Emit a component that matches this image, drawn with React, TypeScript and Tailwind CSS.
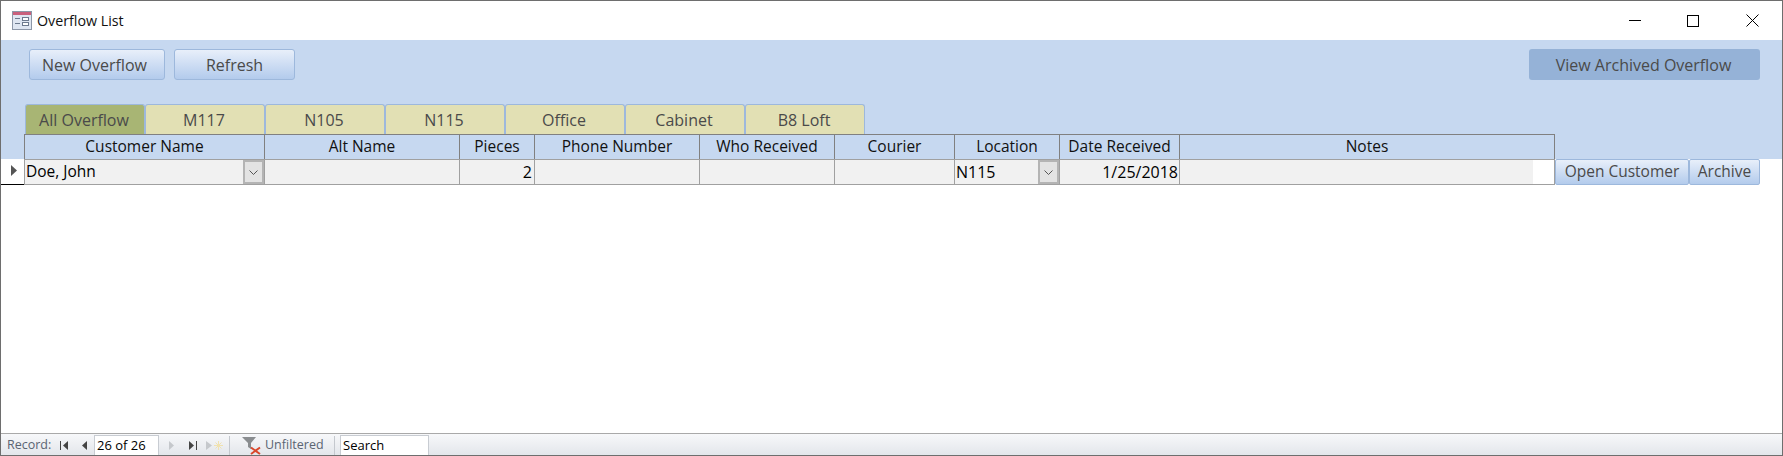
const columns = [
  { name: 'Customer Name', width: 'w-[240px]' },
  { name: 'Alt Name', width: 'w-[195px]' },
  { name: 'Pieces', width: 'w-[75px]' },
  { name: 'Phone Number', width: 'w-[165px]' },
  { name: 'Who Received', width: 'w-[135px]' },
  { name: 'Courier', width: 'w-[120px]' },
  { name: 'Location', width: 'w-[105px]' },
  { name: 'Date Received', width: 'w-[120px]' },
  { name: 'Notes', width: 'w-[375px]' },
]

const tabs = ['All Overflow', 'M117', 'N105', 'N115', 'Office', 'Cabinet', 'B8 Loft']

const FormIcon = () => (
  <svg width="20" height="19" viewBox="0 0 20 19">
    <rect x="0.5" y="0.5" width="19" height="18" fill="#dfe6f1" stroke="#8d97a8" />
    <rect x="1" y="1" width="18" height="3" fill="#c9607c" />
    <rect x="3" y="7" width="5" height="1" fill="#6d7a8e" />
    <rect x="3" y="12" width="5" height="1" fill="#6d7a8e" />
    <rect x="10.5" y="6.5" width="6" height="3" fill="#fff" stroke="#6d7a8e" strokeWidth="1" />
    <rect x="10.5" y="11.5" width="6" height="3" fill="#fff" stroke="#6d7a8e" strokeWidth="1" />
  </svg>
)

const Chevron = () => (
  <svg width="9" height="5" viewBox="0 0 9 5" fill="none" stroke="#555" strokeWidth="1">
    <path d="M0.5 0.5 L4.5 4.5 L8.5 0.5" />
  </svg>
)

const ComboButton = () => (
  <div className="flex h-full w-[21px] shrink-0 items-center justify-center border-2 border-[#b4b4b4] bg-[#e3e3e3]">
    <Chevron />
  </div>
)

const NavIcon = ({ d, fill, bar }: { d: string; fill: string; bar?: 'left' | 'right' }) => (
  <svg width="8" height="9" viewBox="0 0 8 9" fill={fill}>
    {bar === 'left' && <rect x="0" y="0" width="1" height="9" />}
    {bar === 'right' && <rect x="7" y="0" width="1" height="9" />}
    <path d={d} />
  </svg>
)

const ActionButton = ({ label, className }: { label: string; className: string }) => (
  <button className={`flex items-center justify-center border border-[#9db8dc] bg-gradient-to-b from-[#e8effa] to-[#b3cbec] text-[#4a4a4a] ${className}`}>
    {label}
  </button>
)

export default function App() {
  return (
    <div className="flex h-[456px] w-[1783px] flex-col overflow-hidden border border-[#6e6e6e] bg-white font-['Open_Sans',sans-serif] text-[15.5px]">
      {/* title bar */}
      <div className="flex h-[39px] shrink-0 items-center pl-[11px]">
        <FormIcon />
        <span className="ml-[5px] text-[14.25px] text-[#111]">Overflow List</span>
        <div className="ml-auto flex items-center pr-[23px]">
          <div className="h-px w-[12px] bg-black" />
          <div className="ml-[46px] h-[12px] w-[12px] border border-black" />
          <svg width="13" height="13" viewBox="0 0 13 13" stroke="#000" strokeWidth="1" className="ml-[47px]">
            <path d="M0.5 0.5 L12.5 12.5 M12.5 0.5 L0.5 12.5" />
          </svg>
        </div>
      </div>

      {/* form header */}
      <div className="flex h-[119px] shrink-0 flex-col bg-[#c6d8f0]">
        <div className="flex h-[64px] shrink-0 items-start pl-[28px] pr-[22px] pt-[9px] text-[16px]">
          <ActionButton label="New Overflow" className="h-[31px] w-[136px] rounded-[3px] pr-[5px]" />
          <ActionButton label="Refresh" className="ml-[9px] h-[31px] w-[121px] rounded-[3px]" />
          <button className="ml-auto flex h-[31px] w-[231px] items-center justify-center rounded-[3px] bg-[#95b2d7] pr-[2px] text-[#4a4a4a]">
            View Archived Overflow
          </button>
        </div>
        <div className="flex h-[30px] shrink-0 pl-[24px] text-[16px]">
          {tabs.map((tab, i) => (
            <div
              key={tab}
              className={`flex w-[120px] items-center justify-center rounded-t-[3px] border border-b-0 border-[#9db8dc] pr-[2px] text-[#4a4a4a] ${i === 0 ? 'bg-[#a8b574]' : 'bg-[#e2e0b4]'}`}
            >
              {tab}
            </div>
          ))}
        </div>
        <div className="flex h-[25px] shrink-0 pl-[23px]">
          <div className="flex border-t border-l border-[#808080]">
            {columns.map((col) => (
              <div key={col.name} className={`flex items-center justify-center border-r border-[#808080] text-[#111] ${col.width}`}>
                {col.name}
              </div>
            ))}
          </div>
        </div>
      </div>

      {/* record row */}
      <div className="flex h-[26px] shrink-0">
        <div className="flex w-[23px] shrink-0 items-center border-b border-black pl-[10px]">
          <svg width="6" height="11" viewBox="0 0 6 11" fill="#555" className="-mt-[3px]">
            <path d="M0 0 L6 5.5 L0 11 Z" />
          </svg>
        </div>
        <div className="flex border-y border-l border-[#a0a0a0] bg-[#f1f1f1] text-black">
          <div className="flex w-[240px] items-center justify-between border-r border-[#a0a0a0] pl-[1px]">
            <span>Doe, John</span>
            <ComboButton />
          </div>
          <div className="w-[195px] border-r border-[#a0a0a0]" />
          <div className="flex w-[75px] items-center justify-end border-r border-[#a0a0a0] pr-[2px] text-[16px]">2</div>
          <div className="w-[165px] border-r border-[#a0a0a0]" />
          <div className="w-[135px] border-r border-[#a0a0a0]" />
          <div className="w-[120px] border-r border-[#a0a0a0]" />
          <div className="flex w-[105px] items-center justify-between border-r border-[#a0a0a0] pl-[1px] text-[16px]">
            <span>N115</span>
            <ComboButton />
          </div>
          <div className="flex w-[120px] items-center justify-end border-r border-[#a0a0a0] pr-[1px] text-[16px]">1/25/2018</div>
          <div className="flex w-[375px] border-r border-[#a0a0a0]">
            <div className="w-[353px] bg-[#f1f1f1]" />
            <div className="w-[21px] bg-white" />
          </div>
        </div>
        <ActionButton label="Open Customer" className="h-[26px] w-[134px] rounded-[2px]" />
        <ActionButton label="Archive" className="h-[26px] w-[71px] rounded-[2px]" />
      </div>

      <div className="flex-1" />

      {/* navigation bar */}
      <div className="flex h-[22px] shrink-0 items-center border-t border-[#a9a9a9] bg-gradient-to-b from-[#f7f8fa] to-[#e3e6eb] pt-[2px] text-[12.5px] text-[#5a6472]">
        <span className="ml-[6px] w-[52px]">Record:</span>
        <div className="flex w-[22px] justify-start pl-[1px]">
          <NavIcon d="M8 0 L3 4.5 L8 9 Z" fill="#444" bar="left" />
        </div>
        <div className="flex w-[14px] justify-start">
          <NavIcon d="M6 0 L1 4.5 L6 9 Z" fill="#444" />
        </div>
        <div className="flex h-[19px] w-[63px] items-center bg-white pl-[2px] text-[13px] text-black outline outline-1 outline-[#c8ccd2]">26 of 26</div>
        <div className="ml-[11px] flex w-[20px]">
          <NavIcon d="M0 0 L5 4.5 L0 9 Z" fill="#c5c8cc" />
        </div>
        <div className="flex w-[17px]">
          <NavIcon d="M0 0 L5 4.5 L0 9 Z" fill="#444" bar="right" />
        </div>
        <div className="flex w-[23px] items-center">
          <NavIcon d="M0 0 L6 4.5 L0 9 Z" fill="#c5c8cc" />
          <svg width="9" height="9" viewBox="0 0 9 9" stroke="#f0e2b0" strokeWidth="1">
            <path d="M4.5 0 V9 M0 4.5 H9 M1.5 1.5 L7.5 7.5 M7.5 1.5 L1.5 7.5" />
          </svg>
        </div>
        <div className="h-full w-px bg-[#c4c8ce]" />
        <div className="ml-[12px] flex w-[23px]">
          <svg width="19" height="19" viewBox="0 0 19 19" className="-mt-[1px]">
            <path d="M0 1 H14 L9 7 V13 L6 11 V7 Z" fill="#8a8d90" />
            <path d="M9 11.5 L18 18 M18 11.5 L9 18" stroke="#d9472b" strokeWidth="2" />
          </svg>
        </div>
        <span className="w-[69px]">Unfiltered</span>
        <div className="h-full w-px bg-[#c4c8ce]" />
        <div className="ml-[6px] flex h-[19px] w-[87px] items-center bg-white pl-[2px] text-[13px] text-black outline outline-1 outline-[#c8ccd2]">Search</div>
      </div>
    </div>
  )
}
